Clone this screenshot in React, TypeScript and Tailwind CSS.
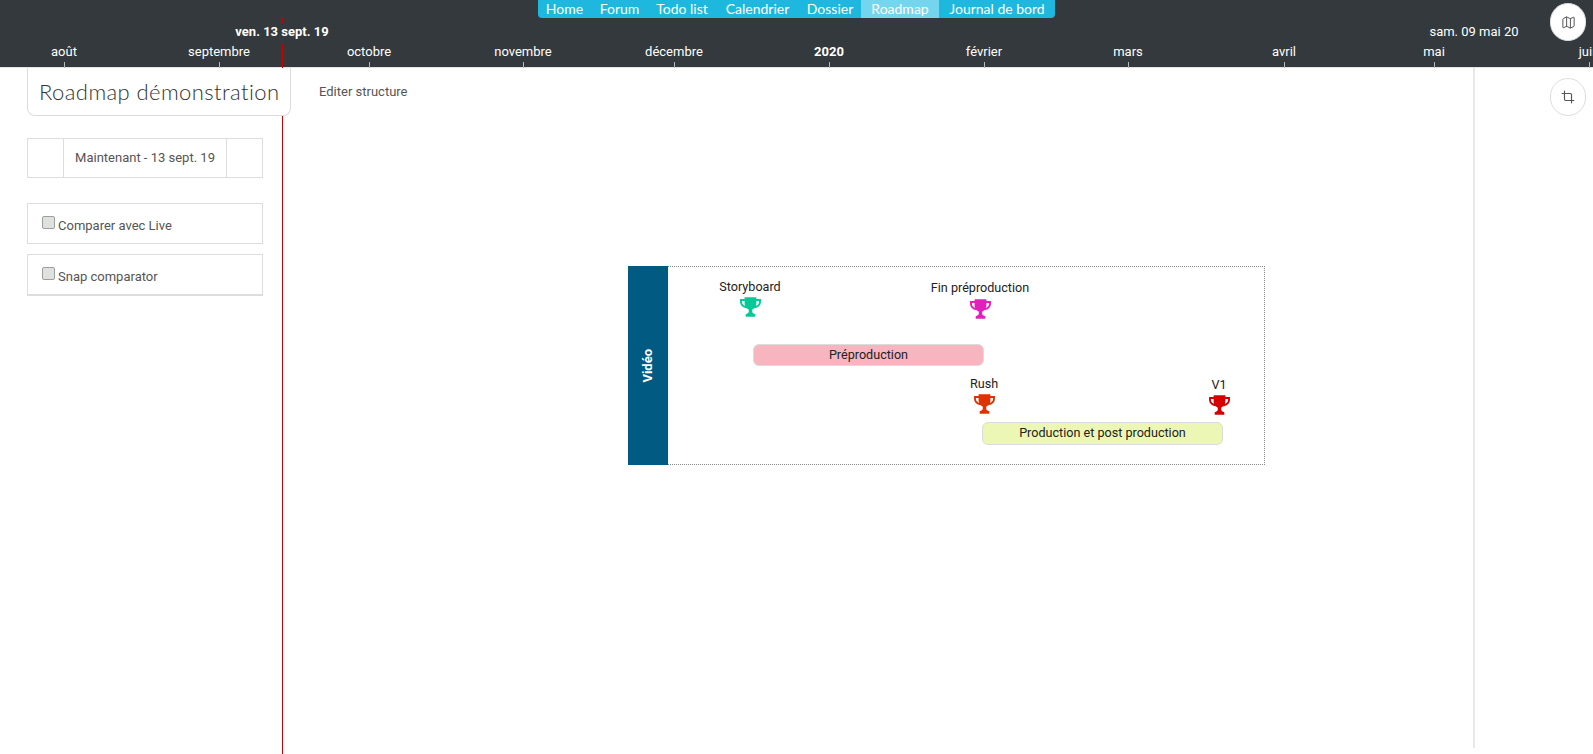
import { Crop, Map as MapIcon } from "lucide-react";

const months = [
  { label: "août", x: 64 },
  { label: "septembre", x: 219 },
  { label: "octobre", x: 369 },
  { label: "novembre", x: 523 },
  { label: "décembre", x: 674 },
  { label: "2020", x: 829, bold: true },
  { label: "février", x: 984 },
  { label: "mars", x: 1128 },
  { label: "avril", x: 1284 },
  { label: "mai", x: 1434 },
  { label: "juin", x: 1589 },
];

const nav = [
  { label: "Home", cls: "w-[53px]" },
  { label: "Forum", cls: "w-[57px]" },
  { label: "Todo list", cls: "w-[68px]" },
  { label: "Calendrier", cls: "w-[83px]" },
  { label: "Dossier", cls: "w-[62px]" },
  { label: "Roadmap", cls: "w-[78px] bg-[#74d6ee]" },
  { label: "Journal de bord", cls: "w-[116px]" },
];

const milestones = [
  { label: "Storyboard", cx: 750, ly: 287, ty: 297, tx: 740, color: "#06c995" },
  { label: "Fin préproduction", cx: 980, ly: 288, ty: 299, tx: 970, color: "#e221bd" },
  { label: "Rush", cx: 984, ly: 384, ty: 394, tx: 974, color: "#dd3300" },
  { label: "V1", cx: 1219, ly: 385, ty: 395, tx: 1209, color: "#d50000" },
];

const CHART_X = 629;
const CHART_Y = 267;

function Trophy({ color, x, y }: { color: string; x: number; y: number }) {
  return (
    <svg
      className="absolute"
      width="21"
      height="20"
      viewBox="0 0 21 20"
      style={{ left: x, top: y }}
    >
      <path
        fill={color}
        d="M4.6 0.3H16.4V6.8C16.4 9.8 13.9 12 12.2 12.7V14.6C12.2 15.9 13.6 16.8 15.3 17.3V19.7H5.7V17.3C7.4 16.8 8.8 15.9 8.8 14.6V12.7C7.1 12 4.6 9.8 4.6 6.8Z"
      />
      <path
        fill="none"
        stroke={color}
        strokeWidth="1.9"
        d="M5.5 3H1V5C1 7.6 3.4 9.7 6.8 10.2M15.5 3H20V5C20 7.6 17.6 9.7 14.2 10.2"
      />
    </svg>
  );
}

function Check({ label }: { label: string }) {
  return (
    <>
      <input
        type="checkbox"
        className="mb-[2px] mr-[3px] h-[13px] w-[13px] appearance-none rounded-[2px] border border-[#9c9f9c] bg-[#dfe1df]"
      />
      <span className="mt-[5px]">{label}</span>
    </>
  );
}

export default function App() {
  return (
    <div className="relative h-[754px] w-[1593px] overflow-hidden bg-white font-['Roboto',sans-serif] text-[13px]">
      <header className="relative h-[68px] border-b border-[#e4e4e4] bg-[#33393c]">
        <nav className="absolute left-[538px] top-0 flex h-[18px] w-[517px] overflow-hidden rounded-b-[4px] bg-[#1eb7dd] font-['Lato',sans-serif] text-[14px] leading-[18px] text-white">
          {nav.map((n) => (
            <span key={n.label} className={"block h-[18px] shrink-0 text-center whitespace-nowrap " + n.cls}>
              {n.label}
            </span>
          ))}
        </nav>

        <span className="absolute left-[1474px] top-[24px] -translate-x-1/2 whitespace-nowrap leading-4 text-white">
          sam. 09 mai 20
        </span>

        {months.map((m) => (
          <div key={m.label} className="absolute top-[44px] h-[24px]" style={{ left: m.x }}>
            <span
              className={
                "absolute left-0 top-0 -translate-x-1/2 whitespace-nowrap leading-4 text-white " +
                (m.bold ? "font-bold" : "")
              }
            >
              {m.label}
            </span>
            <span className="absolute bottom-0 left-0 h-[6px] w-px bg-[#b5b8ba]" />
          </div>
        ))}

        <button className="absolute left-[1550px] top-[3px] flex h-[38px] w-[36px] items-center justify-center rounded-full border border-[#ddd] bg-white text-[#555]">
          <MapIcon size={15} strokeWidth={1.6} />
        </button>
      </header>

      <div className="flex h-[686px]">
        <aside className="ml-[27px] flex w-[236px] shrink-0 flex-col text-[#555]">
          <div className="relative z-20 flex h-[48px] w-[264px] items-center rounded-b-[8px] border border-t-0 border-[#dcdcdc] bg-white pb-[1px] pl-[11px] font-['Lato',sans-serif] text-[22px] font-light tracking-[0.42px] whitespace-nowrap text-[#333]">
            Roadmap démonstration
          </div>
          <div className="mt-[22px] flex h-[40px] border border-[#ddd]">
            <div className="w-[36px] border-r border-[#ddd]" />
            <div className="flex flex-1 items-center justify-center whitespace-nowrap">Maintenant - 13 sept. 19</div>
            <div className="w-[36px] border-l border-[#ddd]" />
          </div>
          <label className="mt-[25px] flex h-[41px] items-center border border-[#ddd] pl-[14px]">
            <Check label="Comparer avec Live" />
          </label>
          <label className="mt-[10px] flex h-[42px] items-center border border-b-2 border-[#ddd] pl-[14px]">
            <Check label="Snap comparator" />
          </label>
        </aside>

        <main className="ml-[56px] flex-1 text-[#555]">
          <p className="mt-[16px] leading-4">Editer structure</p>
          <section className="relative ml-[309px] mt-[166px] flex h-[199px] w-[637px] border border-dotted border-[#888] text-[12.6px]">
            <div className="-my-px -ml-px flex w-[40px] items-center justify-center bg-[#005a82]">
              <span className="-rotate-90 whitespace-nowrap text-[13px] font-bold text-white">Vidéo</span>
            </div>
            {milestones.map((m) => (
              <div key={m.label} className="contents">
                <span
                  className="absolute -translate-x-1/2 -translate-y-1/2 whitespace-nowrap leading-4 text-[#222]"
                  style={{ left: m.cx - CHART_X, top: m.ly - CHART_Y }}
                >
                  {m.label}
                </span>
                <Trophy color={m.color} x={m.tx - CHART_X} y={m.ty - CHART_Y} />
              </div>
            ))}
            <div className="absolute left-[124px] top-[77px] flex h-[22px] w-[231px] items-center justify-center rounded-[6px] border border-[#dcdcdc] bg-[#f7b5bf] text-[#222]">
              Préproduction
            </div>
            <div className="absolute left-[353px] top-[155px] flex h-[23px] w-[241px] items-center justify-center rounded-[6px] border border-[#dcdcdc] bg-[#edf7b5] text-[#222]">
              Production et post production
            </div>
          </section>
        </main>

        <aside className="relative h-[680px] w-[120px] shrink-0 border-l-2 border-[#e8e8e8]">
          <button className="absolute left-[75px] top-[10px] flex h-[38px] w-[36px] items-center justify-center rounded-full border border-[#ddd] bg-white text-[#555]">
            <Crop size={14} strokeWidth={2} />
          </button>
        </aside>
      </div>

      <div className="absolute bottom-0 left-[282px] top-[18px] z-10 w-px bg-[#cc0000]" />
      <span className="absolute left-[282px] top-[23px] z-10 h-[21px] -translate-x-1/2 whitespace-nowrap bg-[#33393c] px-[2px] font-bold leading-[18px] text-white">
        ven. 13 sept. 19
      </span>
    </div>
  );
}
